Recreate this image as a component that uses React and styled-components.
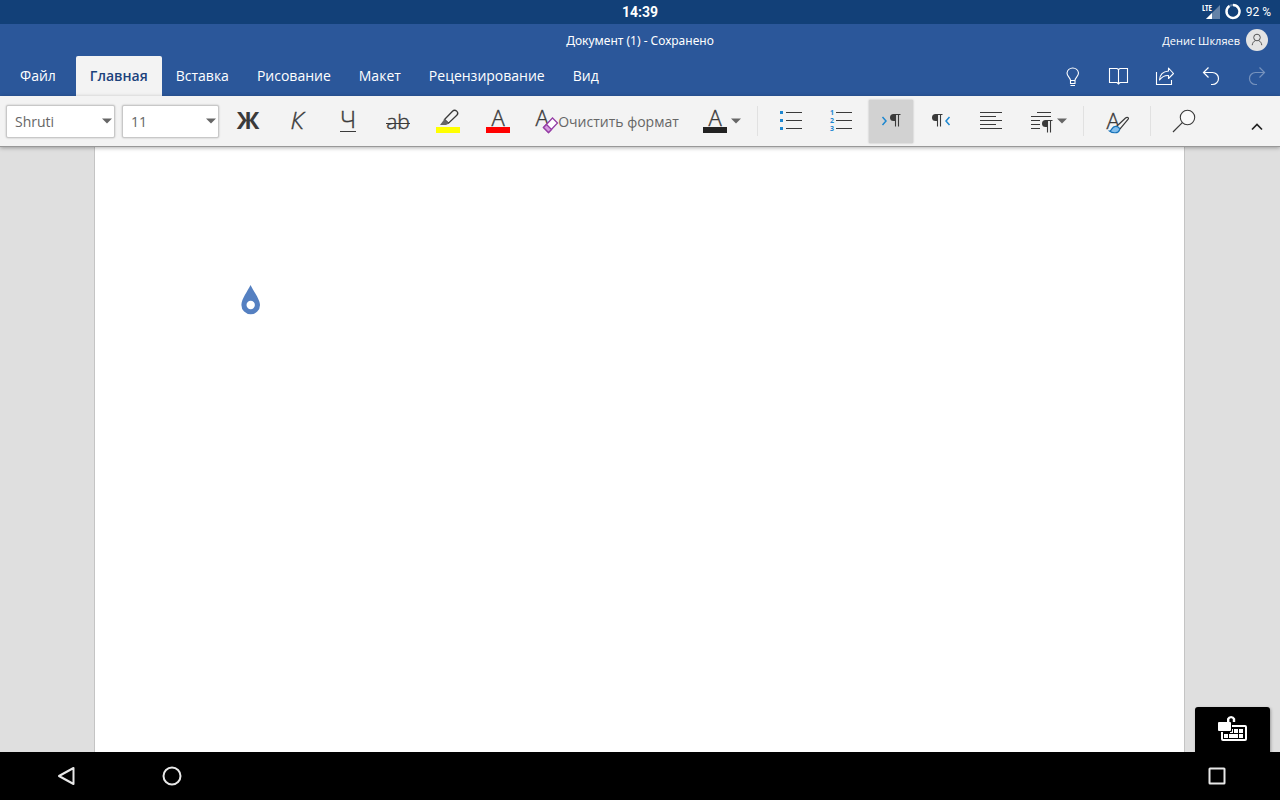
import React from "react";
import styled, { createGlobalStyle } from "styled-components";

const ui = `"Open Sans", "Noto Sans", sans-serif`;

const GlobalStyle = createGlobalStyle`
  * { box-sizing: border-box; }
  body { margin: 0; font-family: ${ui}; }
  button, select { font: inherit; color: inherit; border: 0; background: none; margin: 0; padding: 0; }
  svg { display: block; flex: none; overflow: visible; }
`;

const Screen = styled.div`
  display: flex;
  flex-direction: column;
  min-height: 100vh;
`;

const StatusBar = styled.div`
  display: grid;
  grid-template-columns: 1fr auto 1fr;
  align-items: center;
  height: 24px;
  background: #124078;
  color: #fff;
  font-family: Roboto, sans-serif;
`;

const Clock = styled.time`
  grid-column: 2;
  font-size: 14px;
  font-weight: 700;
`;

const StatusIcons = styled.div`
  display: flex;
  justify-content: flex-end;
  align-items: center;
  gap: 5px;
  padding-right: 9px;
  font-size: 12px;
`;

const Header = styled.header`
  background: #2b579a;
  color: #fff;
`;

const TitleRow = styled.div`
  display: grid;
  grid-template-columns: 1fr auto 1fr;
  align-items: center;
  height: 32px;
`;

const DocTitle = styled.h1`
  grid-column: 2;
  margin: 0;
  font-family: "Noto Sans", sans-serif;
  font-size: 12px;
  font-weight: 400;
`;

const Account = styled.button`
  display: flex;
  justify-self: end;
  align-items: center;
  gap: 6px;
  padding-right: 12px;
  font-size: 11px;
`;

const RibbonRow = styled.div`
  display: flex;
  justify-content: space-between;
  height: 40px;
`;

const Tabs = styled.nav`
  display: flex;
`;

const Tab = styled.button`
  padding: 0 ${(p) => (p.$wide ? 20 : 14)}px 2px;
  font-size: 14px;
  font-weight: ${(p) => (p.$active ? 600 : 400)};
  color: ${(p) => (p.$active ? "#1c427c" : "#fff")};
  background: ${(p) => (p.$active ? "#f3f3f3" : "transparent")};
  border-radius: 2px 2px 0 0;
`;

const QuickActions = styled.div`
  display: flex;
`;

const QuickButton = styled.button`
  display: flex;
  align-items: center;
  justify-content: center;
  width: 46px;
  opacity: ${(p) => (p.disabled ? 0.35 : 1)};
`;

const Toolbar = styled.div`
  position: relative;
  z-index: 1;
  display: flex;
  align-items: center;
  gap: 6px;
  height: 51px;
  padding-left: 6px;
  background: #f3f3f3;
  border-bottom: 1px solid #989898;
  box-shadow: 0 1px 4px rgba(0, 0, 0, 0.3);
  color: #3a3a3a;
`;

const Picker = styled.div`
  position: relative;
  width: ${(p) => p.$width}px;
  margin-right: 1px;

  svg {
    position: absolute;
    right: 3px;
    top: 13px;
    pointer-events: none;
  }
`;

const PickerSelect = styled.select`
  appearance: none;
  width: 100%;
  height: 33px;
  padding: 0 8px;
  background: #fff;
  border: 1px solid #c8c8c8;
  border-radius: 2px;
  box-shadow: 0 0 2px rgba(0, 0, 0, 0.25);
  color: #666;
  font-size: 14px;
`;

const ToolButton = styled.button`
  display: flex;
  align-items: center;
  justify-content: center;
  width: 44px;
  height: 43px;
  background: ${(p) => (p.$on ? "#d2d2d2" : "transparent")};
  box-shadow: ${(p) => (p.$on ? "0 0 2px rgba(0, 0, 0, 0.25)" : "none")};
`;

const MenuButton = styled(ToolButton)`
  justify-content: flex-start;
  gap: 4px;
  width: 53px;
  padding-left: 10px;
`;

const ClearButton = styled(ToolButton)`
  width: 161px;
  color: #666;
  font-size: 14px;
  white-space: nowrap;
`;

const Divider = styled.span`
  width: 1px;
  height: 30px;
  margin: 0 5px;
  background: #e1e1e1;
`;

const CollapseButton = styled(ToolButton)`
  width: 46px;
  margin-left: auto;
  padding-top: 12px;
`;

const Workspace = styled.main`
  position: relative;
  display: flex;
  flex: 1;
  background: #dfdfdf;
`;

const Paper = styled.article`
  position: relative;
  flex: 1;
  margin: 0 95px 0 94px;
  background: #fff;
  border: solid #c4c4c4;
  border-width: 0 1px;
`;

const CursorHandle = styled.svg`
  position: absolute;
  left: 146px;
  top: 138px;
`;

const KeyboardButton = styled.button`
  position: absolute;
  right: 10px;
  bottom: 0;
  display: flex;
  justify-content: center;
  width: 75px;
  height: 45px;
  padding-top: 7px;
  background: #000;
  border-radius: 3px 3px 0 0;
  box-shadow: 1px 1px 3px rgba(0, 0, 0, 0.3);
`;

const NavBar = styled.footer`
  position: relative;
  display: flex;
  align-items: center;
  height: 48px;
  padding: 0 39px 0 42px;
  background: #000;
`;

const NavButton = styled.button`
  display: flex;
  align-items: center;
  justify-content: center;
  width: 48px;
  height: 48px;
  margin-left: ${(p) => (p.$end ? "auto" : 0)};
  margin-right: ${(p) => (p.$end ? 0 : 58)}px;
`;

const Icon = ({ w = 24, h = 24, children, ...rest }) => (
  <svg width={w} height={h} viewBox={`0 0 ${w} ${h}`} fill="none" stroke="currentColor" strokeWidth="1.3" aria-hidden="true" {...rest}>
    {children}
  </svg>
);

const Glyph = ({ x = 12, y, size = 22, weight = 300, children, ...rest }) => (
  <text
    x={x}
    y={y}
    fontSize={size}
    fontWeight={weight}
    textAnchor="middle"
    fill="currentColor"
    stroke={weight === 300 ? "currentColor" : "none"}
    strokeWidth=".4"
    fontFamily={ui}
    {...rest}
  >
    {children}
  </text>
);

const Caret = () => (
  <Icon w={10} h={6}>
    <path d="M0 .5h10L5 5.5z" fill="#666" stroke="none" />
  </Icon>
);

const Pilcrow = ({ x, y }) => (
  <g transform={`translate(${x} ${y})`}>
    <path d="M5 0H3.5a3.5 3.5 0 0 0 0 7H5z" fill="currentColor" stroke="none" />
    <path d="M4.5 .5H10.5M5.5 0V12.5M8.5 0V12.5" strokeWidth="1.1" />
  </g>
);

const Signal = () => (
  <Icon w={18} h={16} stroke="none">
    <path d="M18 1v14H4z" fill="#fff" opacity=".35" />
    <path d="M10 9v6H4z" fill="#fff" />
    <text x="0" y="7" fontSize="8" fontWeight="700" fontFamily="'Open Sans Condensed', Roboto, sans-serif" fill="#fff">LTE</text>
  </Icon>
);

const tabs = ["Файл", "Главная", "Вставка", "Рисование", "Макет", "Рецензирование", "Вид"];

export default function App() {
  return (
    <Screen>
      <GlobalStyle />
      <StatusBar>
        <Clock>14:39</Clock>
        <StatusIcons>
          <Signal />
          <Icon w={16} h={16}>
            <circle cx="8" cy="7.500" r="6.500" strokeWidth="2" opacity=".35" />
            <path d="M8 1A6.500 6.500 0 1 1 4.400 2.100" strokeWidth="2.400" />
          </Icon>
          <span>92 %</span>
        </StatusIcons>
      </StatusBar>

      <Header>
        <TitleRow>
          <DocTitle>Документ (1) - Сохранено</DocTitle>
          <Account>
            Денис Шкляев
            <Icon w={22} h={22}>
              <circle cx="11" cy="11" r="11" fill="#e4e4e4" stroke="none" />
              <g stroke="#555" strokeWidth="1">
                <circle cx="11" cy="8.500" r="3.300" />
                <path d="M6.200 16.200c.3-2.400 1.600-4 3.300-4.600M15.800 16.200c-.3-2.400-1.600-4-3.300-4.600" />
              </g>
            </Icon>
          </Account>
        </TitleRow>
        <RibbonRow>
          <Tabs>
            {tabs.map((t, i) => (
              <Tab key={t} $wide={i === 0} $active={i === 1}>{t}</Tab>
            ))}
          </Tabs>
          <QuickActions>
            <QuickButton aria-label="Помощник">
              <Icon w={14} h={20} strokeWidth="1.100">
                <path d="M4.500 14.500C4.500 11.500 1 10.500 1 7A5.800 5.800 0 0 1 12.500 7C12.500 10.500 9 11.500 9 14.500ZM4.500 14.500V17.500H9V14.500M4.500 19.500H9" />
              </Icon>
            </QuickButton>
            <QuickButton aria-label="Режим чтения">
              <Icon w={20} h={18}>
                <path d="M9.500 2.500L8 1.500H.5V15.500H8L9.500 17L11 15.500H18.500V1.500H11ZM9.500 2.500V17" strokeWidth="1.100" />
              </Icon>
            </QuickButton>
            <QuickButton aria-label="Поделиться">
              <Icon w={20} h={20} strokeWidth="1.100">
                <path d="M1.500 6V18.500H16.500V14" />
                <path d="M13.500 2L18.500 7.500L13.500 12.500V9.500C9.500 9.300 7 10.500 4.500 14C4.800 9 8 5.500 13.500 5Z" strokeLinejoin="round" />
              </Icon>
            </QuickButton>
            <QuickButton aria-label="Отменить">
              <Icon w={18} h={20} strokeWidth="1.200">
                <path d="M6.500 1.500L1.500 6.500L6.500 11.500M1.500 6.500H10.500A6 6 0 0 1 10.500 18.500H9" />
              </Icon>
            </QuickButton>
            <QuickButton aria-label="Вернуть" disabled>
              <Icon w={18} h={20} strokeWidth="1.200">
                <path d="M11.500 1.500L16.500 6.500L11.500 11.500M16.500 6.500H7.500A6 6 0 0 0 7.500 18.500H9" />
              </Icon>
            </QuickButton>
          </QuickActions>
        </RibbonRow>
      </Header>

      <Toolbar>
        <Picker $width={109}>
          <PickerSelect aria-label="Шрифт" defaultValue="Shruti">
            <option>Shruti</option>
          </PickerSelect>
          <Caret />
        </Picker>
        <Picker $width={97}>
          <PickerSelect aria-label="Размер шрифта" defaultValue="11">
            <option>11</option>
          </PickerSelect>
          <Caret />
        </Picker>
        <ToolButton aria-label="Полужирный">
          <Icon><Glyph y={20} size={24} weight={700}>Ж</Glyph></Icon>
        </ToolButton>
        <ToolButton aria-label="Курсив">
          <Icon><Glyph x={11} y={20} size={24} fontStyle="italic">К</Glyph></Icon>
        </ToolButton>
        <ToolButton aria-label="Подчёркнутый">
          <Icon>
            <Glyph y={19} size={24}>Ч</Glyph>
            <path d="M4 22.500H20" strokeWidth="1" />
          </Icon>
        </ToolButton>
        <ToolButton aria-label="Зачёркнутый">
          <Icon>
            <Glyph y={20} size={21}>ab</Glyph>
            <path d="M0 14.500H24" strokeWidth="1" />
          </Icon>
        </ToolButton>
        <ToolButton aria-label="Цвет выделения">
          <Icon>
            <path d="M8.500 10.500L16.500 2.200A2.900 2.900 0 0 1 20.800 6.300L12.500 14.200Z" />
            <path d="M8.500 10L13 14.500L10 16H4Z" fill="#666" stroke="none" />
            <path d="M0 18H24V24H0Z" fill="#ff0" stroke="none" />
          </Icon>
        </ToolButton>
        <ToolButton aria-label="Цвет текста">
          <Icon>
            <Glyph y={17}>A</Glyph>
            <path d="M0 18H24V24H0Z" fill="red" stroke="none" />
          </Icon>
        </ToolButton>
        <ClearButton>
          <Icon color="#3a3a3a">
            <Glyph x={8} y={17}>A</Glyph>
            <path d="M9.500 18.500L18.500 9L23.500 14L14.500 23.500Z" fill="#fff" stroke="#953da5" />
            <path d="M9.500 18.500L12.500 15.500L17.500 20.500L14.500 23.500Z" fill="#d59bdf" stroke="#953da5" />
          </Icon>
          Очистить формат
        </ClearButton>
        <MenuButton aria-label="Форматирование шрифта">
          <Icon>
            <Glyph y={17}>A</Glyph>
            <path d="M0 18H24V24H0Z" fill="#222" stroke="none" />
          </Icon>
          <Caret />
        </MenuButton>
        <Divider />
        <ToolButton aria-label="Маркеры">
          <Icon>
            <path d="M7 3.500H23M7 11.500H23M7 19.500H23" strokeWidth="1" />
            <path d="M1 2h3v3h-3zM1 10h3v3h-3zM1 18h3v3h-3z" fill="#1d87d0" stroke="none" />
          </Icon>
        </ToolButton>
        <ToolButton aria-label="Нумерация">
          <Icon>
            <path d="M7 3.500H23M7 11.500H23M7 19.500H23" strokeWidth="1" />
            <g color="#1d87d0">
              <Glyph x={3} y={6} size={7} weight={700}>1</Glyph>
              <Glyph x={3} y={14} size={7} weight={700}>2</Glyph>
              <Glyph x={3} y={22} size={7} weight={700}>3</Glyph>
            </g>
          </Icon>
        </ToolButton>
        <ToolButton $on aria-label="Слева направо" aria-pressed="true">
          <Icon>
            <path d="M3.500 8L7 12L3.500 16" stroke="#1d87d0" strokeWidth="1.500" />
            <Pilcrow x={11} y={5} />
          </Icon>
        </ToolButton>
        <ToolButton aria-label="Справа налево">
          <Icon>
            <Pilcrow x={3} y={5} />
            <path d="M20.500 8L17 12L20.500 16" stroke="#1d87d0" strokeWidth="1.500" />
          </Icon>
        </ToolButton>
        <ToolButton aria-label="По левому краю">
          <Icon>
            <path d="M1 3.500H23M1 7.500H17M1 11.500H23M1 15.500H17M1 19.500H23" strokeWidth="1" />
          </Icon>
        </ToolButton>
        <MenuButton aria-label="Форматирование абзаца">
          <Icon>
            <path d="M8 3.500H22M2 7.500H22M2 11.500H11M2 15.500H11M2 19.500H11" strokeWidth="1" />
            <Pilcrow x={13} y={11} />
          </Icon>
          <Caret />
        </MenuButton>
        <Divider />
        <ToolButton aria-label="Стили">
          <Icon>
            <Glyph x={8} y={20}>A</Glyph>
            <path d="M11.500 17.500L20.500 9C22 7.800 24.500 8.500 23 10.500L15 20Z" fill="#f3f3f3" strokeWidth="1.200" />
            <path d="M4.500 22C7 22 6.500 17.500 10.500 17.300C13 17.200 15 19 14.500 21C13.500 24.500 7.500 24.500 4.500 22Z" fill="#83beec" stroke="#1672b8" strokeWidth="1.200" />
          </Icon>
        </ToolButton>
        <Divider />
        <ToolButton aria-label="Найти">
          <Icon>
            <circle cx="15.500" cy="8.500" r="7.200" strokeWidth="1.100" fill="#fafafa" />
            <path d="M10.300 13.700L1 23" strokeWidth="1.200" />
          </Icon>
        </ToolButton>
        <CollapseButton aria-label="Свернуть ленту">
          <Icon w={12} h={8}>
            <path d="M1 6.500L6 1.500L11 6.500" stroke="#222" strokeWidth="1.700" />
          </Icon>
        </CollapseButton>
      </Toolbar>

      <Workspace>
        <Paper>
          <CursorHandle width="20" height="30" viewBox="0 0 20 30" aria-hidden="true">
            <path d="M9.500 0C12 5.500 19 14 19 20A9.300 9.300 0 0 1 .4 20C.4 14 7 5.500 9.500 0Z" fill="#5580c1" />
            <circle cx="9.700" cy="20" r="4.200" fill="#fff" />
          </CursorHandle>
        </Paper>
        <KeyboardButton aria-label="Клавиатура">
          <Icon w={29} h={28} stroke="#fff">
            <rect x="4" y="12" width="24" height="14" rx="1" strokeWidth="2" />
            <path d="M12 15h3v4h-3zM16 15h4v4h-4zM21 15h4v4h-4zM6 20h4v4h-4zM11 20h9v4h-9zM21 20h4v4h-4z" fill="#fff" stroke="none" />
            <rect x="-1" y="7" width="15" height="11" rx="1" fill="#000" stroke="none" />
            <rect x="0" y="8" width="13" height="9" rx="1" fill="#fff" stroke="none" />
            <path d="M10.200 8V5A3.200 3.200 0 0 1 16 5V8" strokeWidth="2.400" />
          </Icon>
        </KeyboardButton>
      </Workspace>

      <NavBar>
        <NavButton aria-label="Назад">
          <Icon stroke="#e8e8e8"><path d="M19.500 4V20L5 12Z" strokeWidth="2" strokeLinejoin="round" /></Icon>
        </NavButton>
        <NavButton aria-label="Домой">
          <Icon stroke="#e8e8e8"><circle cx="12" cy="12" r="8.500" strokeWidth="2" /></Icon>
        </NavButton>
        <NavButton $end aria-label="Недавние">
          <Icon stroke="#e8e8e8"><rect x="4.500" y="4.500" width="15" height="15" rx=".5" strokeWidth="2" /></Icon>
        </NavButton>
      </NavBar>
    </Screen>
  );
}
